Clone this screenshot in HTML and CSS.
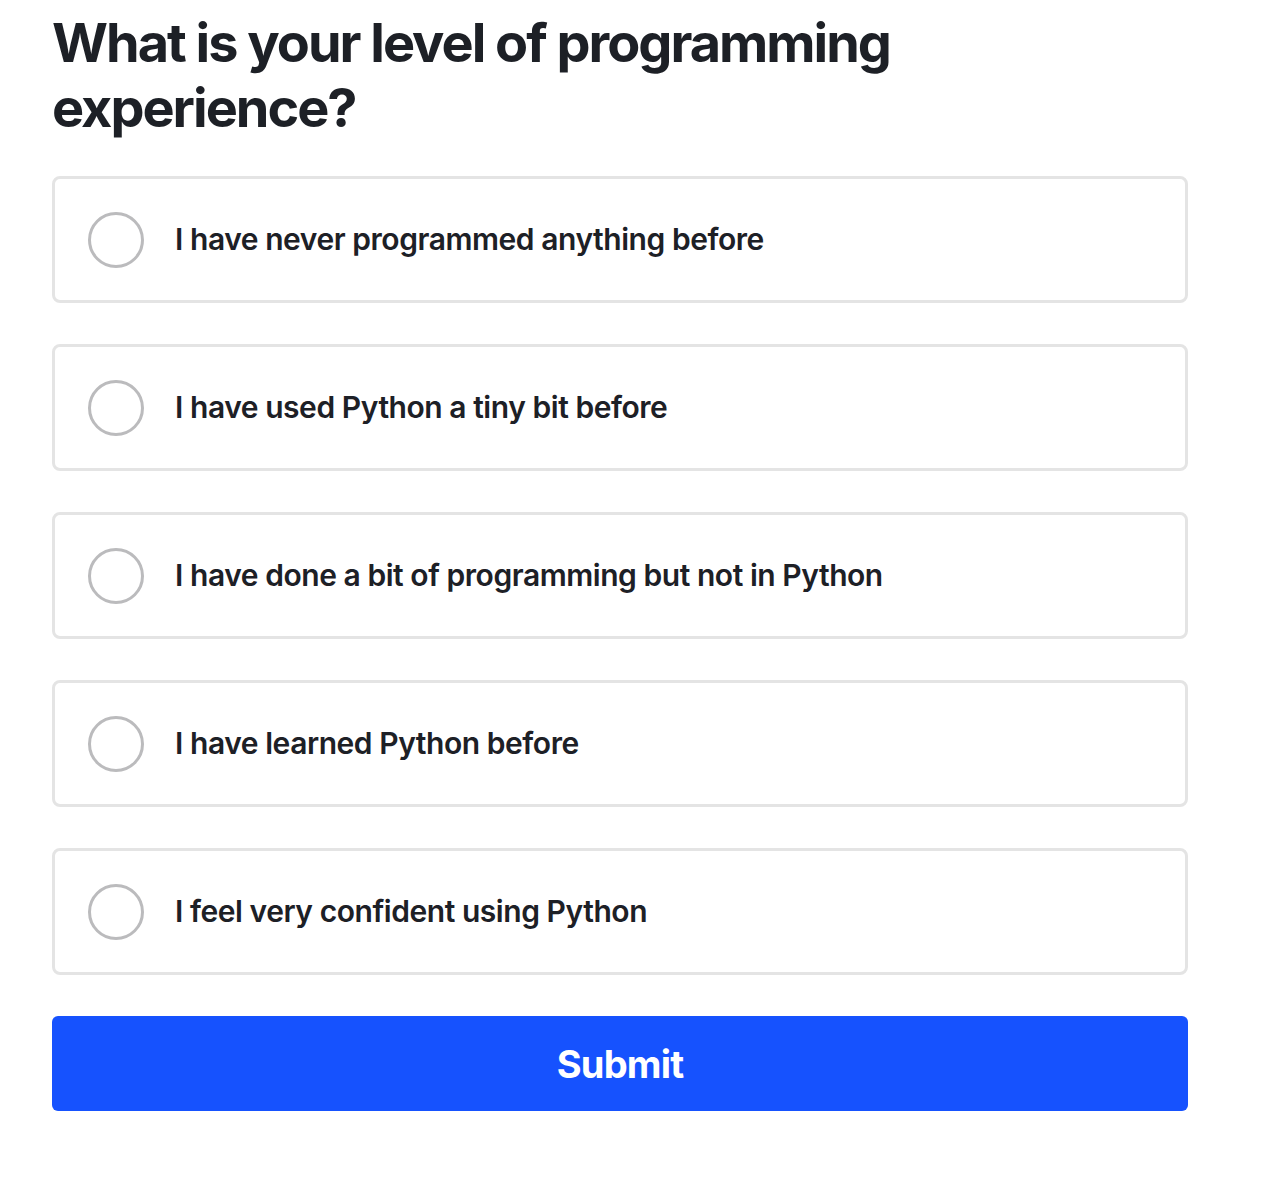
FILE: index.html
```html
<!DOCTYPE html>
<html lang="en">
<head>
<meta charset="utf-8">
<title>Programming experience</title>
<link rel="stylesheet" href="styles.css">
</head>
<body>
<main class="quiz">
  <h1 class="question">What is your level of programming experience?</h1>
  <div class="options">
    <label class="option"><span class="radio"></span><span class="label">I have never programmed anything before</span></label>
    <label class="option"><span class="radio"></span><span class="label">I have used Python a tiny bit before</span></label>
    <label class="option"><span class="radio"></span><span class="label">I have done a bit of programming but not in Python</span></label>
    <label class="option"><span class="radio"></span><span class="label">I have learned Python before</span></label>
    <label class="option"><span class="radio"></span><span class="label">I feel very confident using Python</span></label>
  </div>
  <button class="submit" type="button">Submit</button>
</main>
</body>
</html>
```
FILE: styles.css
```css
html, body {
  margin: 0;
  padding: 0;
  background: #ffffff;
}
body {
  font-family: Inter, "Noto Sans", sans-serif;
  color: #1d2026;
}
.quiz {
  width: 1136px;
  padding: 10px 0 0 52px;
}
.question {
  margin: 0;
  width: 900px;
  font-size: 54px;
  line-height: 65px;
  font-weight: 700;
  letter-spacing: -2px;
}
.options {
  display: flex;
  flex-direction: column;
  gap: 41px;
  margin-top: 36px;
}
.option {
  display: flex;
  align-items: center;
  height: 127px;
  box-sizing: border-box;
  border: 3px solid #e4e4e4;
  border-radius: 8px;
  padding-left: 33px;
}
.radio {
  width: 56px;
  height: 56px;
  box-sizing: border-box;
  border: 3px solid #bbbbbd;
  border-radius: 50%;
  flex: none;
}
.label {
  margin-left: 31px;
  font-size: 30px;
  font-weight: 600;
  letter-spacing: -0.45px;
  position: relative;
  top: -1px;
}
.submit {
  display: block;
  width: 100%;
  height: 95px;
  margin-top: 41px;
  border: none;
  border-radius: 6px;
  background: #1652fe;
  color: #ffffff;
  font-family: Inter, "Noto Sans", sans-serif;
  font-size: 38px;
  font-weight: 700;
  letter-spacing: -0.8px;
}
```
